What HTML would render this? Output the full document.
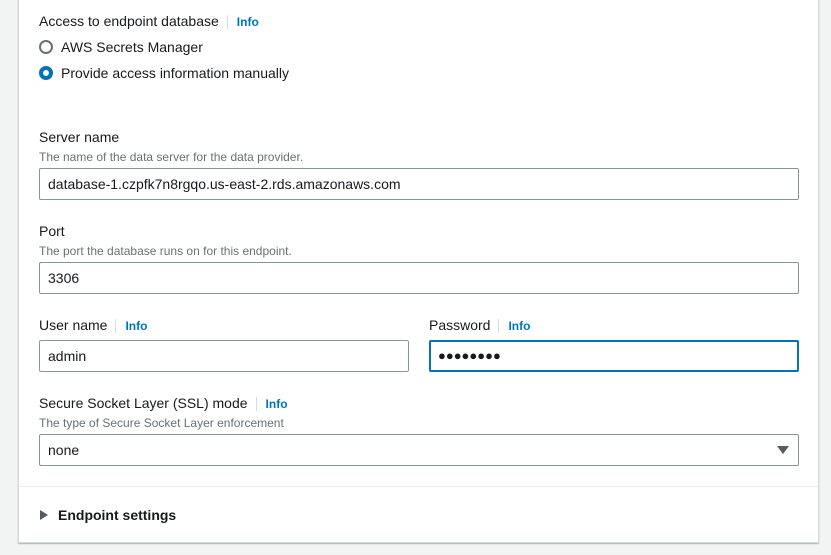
<!DOCTYPE html>
<html><head><style>
body{margin:0;width:831px;height:555px;background:#f2f3f3;font-family:"Liberation Sans",Arial,sans-serif;color:#16191f;position:relative;overflow:hidden}
.panel{position:absolute;left:18px;top:-5px;width:801px;height:548px;background:#fff;border:1px solid #d5dbdb;box-shadow:0 1px 1px rgba(0,28,36,.3);box-sizing:border-box}
.a{position:absolute;white-space:nowrap}
.lbl{font-size:14px;color:#16191f}
.desc{font-size:12px;color:#687078}
.info{font-size:12px;font-weight:bold;color:#0073bb;border-left:1px solid #d5dbdb;padding-left:9px;margin-left:8px}
.inp{position:absolute;height:32px;border:1px solid #879596;border-radius:2px;box-sizing:border-box;font-size:14px;padding:0 8px;line-height:30px;background:#fff}
.radio{position:absolute;width:14px;height:14px;border-radius:50%;box-sizing:border-box}
</style></head><body>
<div class="panel"></div>
<div class="a lbl" style="left:39px;top:13px">Access to endpoint database<span class="info">Info</span></div>
<div class="radio" style="left:39px;top:40px;border:2px solid #687078"></div>
<div class="a lbl" style="left:61px;top:39px">AWS Secrets Manager</div>
<div class="radio" style="left:39px;top:66px;border:4px solid #0073bb"></div>
<div class="a lbl" style="left:61px;top:65px">Provide access information manually</div>

<div class="a lbl" style="left:39px;top:129px">Server name</div>
<div class="a desc" style="left:39px;top:150px">The name of the data server for the data provider.</div>
<div class="inp" style="left:39px;top:168px;width:760px">database-1.czpfk7n8rgqo.us-east-2.rds.amazonaws.com</div>

<div class="a lbl" style="left:39px;top:223px">Port</div>
<div class="a desc" style="left:39px;top:244px">The port the database runs on for this endpoint.</div>
<div class="inp" style="left:39px;top:262px;width:760px">3306</div>

<div class="a lbl" style="left:39px;top:317px">User name<span class="info">Info</span></div>
<div class="inp" style="left:39px;top:340px;width:370px">admin</div>
<div class="a lbl" style="left:429px;top:317px">Password<span class="info">Info</span></div>
<div class="inp" style="left:429px;top:340px;width:370px;border:2px solid #0073bb;line-height:28px;padding-left:7px;font-size:13px;letter-spacing:0">●●●●●●●●</div>

<div class="a lbl" style="left:39px;top:395px">Secure Socket Layer (SSL) mode<span class="info">Info</span></div>
<div class="a desc" style="left:39px;top:416px">The type of Secure Socket Layer enforcement</div>
<div class="inp" style="left:39px;top:434px;width:760px">none
<svg style="position:absolute;right:9px;top:11px" width="12" height="9"><path d="M0 0H12L6 8Z" fill="#545b64"/></svg></div>

<div class="a" style="left:19px;top:486px;width:799px;height:1px;background:#eaeded"></div>
<svg class="a" style="left:40px;top:510px" width="8" height="10"><path d="M0 0L8 5L0 10Z" fill="#545b64"/></svg>
<div class="a lbl" style="left:58px;top:507px;font-weight:bold">Endpoint settings</div>
</body></html>
